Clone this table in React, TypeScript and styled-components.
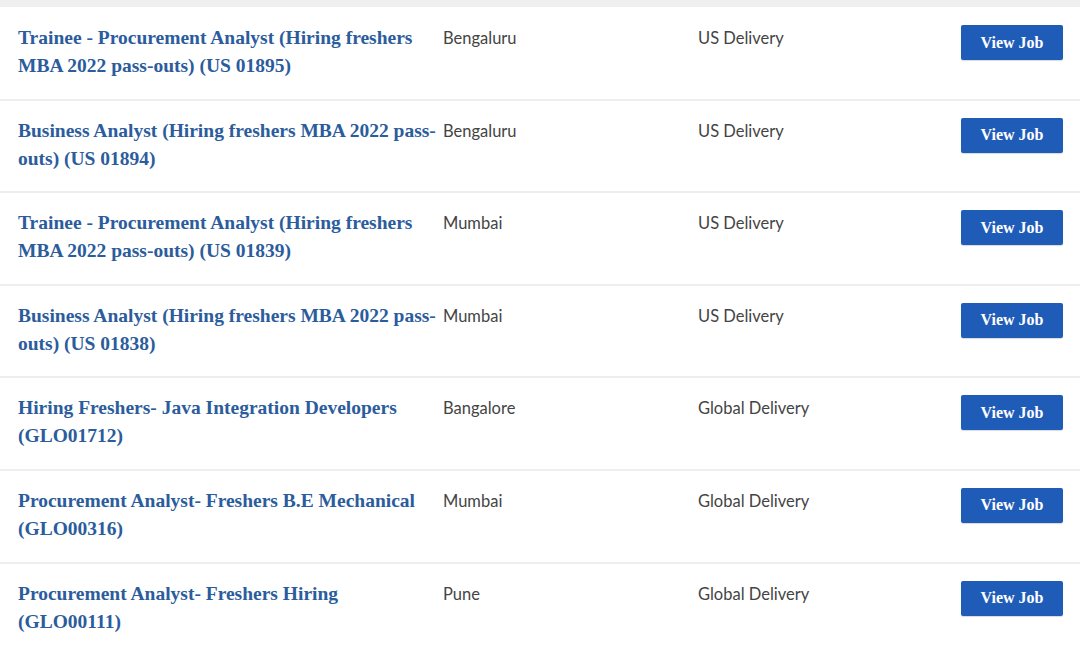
import React from "react";
import styled, { createGlobalStyle } from "styled-components";

const Global = createGlobalStyle`
  html, body { margin: 0; padding: 0; background: #ffffff; }
  * { box-sizing: border-box; }
`;

const Page = styled.div`
  width: 1080px;
  min-height: 647px;
  background: #fff;
  border-top: 7px solid #efefef;
  padding-top: 1px;
`;

const Row = styled.div`
  display: grid;
  grid-template-columns: 425px 255px 1fr auto;
  align-items: start;
  padding: 16px 17px 18.6px 18px;
  border-bottom: 2px solid #eeeeee;
`;

const Title = styled.a`
  font-family: "Liberation Serif", serif;
  font-weight: 700;
  font-size: 19.5px;
  line-height: 28px;
  color: #2b5c9c;
  text-decoration: none;
  padding-right: 3px;
`;

const Cell = styled.div`
  font-family: "Lato", "Open Sans", sans-serif;
  font-size: 16.5px;
  line-height: 28px;
  color: #444;
`;

const Actions = styled.div`
  display: flex;
  justify-content: flex-end;
  padding-top: 1px;
`;

const Button = styled.button`
  width: 102px;
  height: 35px;
  border: none;
  border-radius: 2px;
  background: #1f5cb8;
  color: #fff;
  font-family: "Liberation Serif", serif;
  font-weight: 700;
  font-size: 16px;
  box-shadow: 0 1px 1px rgba(0,0,0,0.15);
  cursor: pointer;
`;

const jobs = [
  { t: "Trainee - Procurement Analyst (Hiring freshers MBA 2022 pass-outs) (US 01895)", l: "Bengaluru", d: "US Delivery" },
  { t: "Business Analyst (Hiring freshers MBA 2022 pass-outs) (US 01894)", l: "Bengaluru", d: "US Delivery" },
  { t: "Trainee - Procurement Analyst (Hiring freshers MBA 2022 pass-outs) (US 01839)", l: "Mumbai", d: "US Delivery" },
  { t: "Business Analyst (Hiring freshers MBA 2022 pass-outs) (US 01838)", l: "Mumbai", d: "US Delivery" },
  { t: "Hiring Freshers- Java Integration Developers (GLO01712)", l: "Bangalore", d: "Global Delivery" },
  { t: "Procurement Analyst- Freshers B.E Mechanical (GLO00316)", l: "Mumbai", d: "Global Delivery" },
  { t: "Procurement Analyst- Freshers Hiring (GLO00111)", l: "Pune", d: "Global Delivery" },
];

export default function App() {
  return (
    <>
      <Global />
      <Page>
        {jobs.map((j, i) => (
          <Row key={i}>
            <Title href="#">{j.t}</Title>
            <Cell>{j.l}</Cell>
            <Cell>{j.d}</Cell>
            <Actions>
              <Button>View Job</Button>
            </Actions>
          </Row>
        ))}
      </Page>
    </>
  );
}
